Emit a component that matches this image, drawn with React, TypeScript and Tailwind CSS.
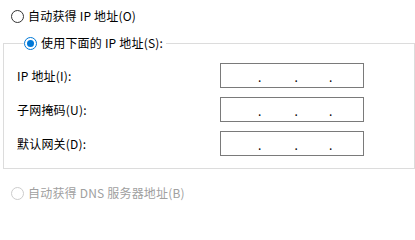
import React from "react";

type RadioProps = {
  checked?: boolean;
  disabled?: boolean;
  label: string;
};

const Radio: React.FC<RadioProps> = ({ checked, disabled, label }) => {
  return (
    <div className="flex items-center h-4">
      <span
        className={
          checked
            ? "w-[13px] h-[13px] rounded-full border border-[#0078d7] flex items-center justify-center"
            : disabled
            ? "w-[13px] h-[13px] rounded-full border border-[#cccccc]"
            : "w-[13px] h-[13px] rounded-full border border-[#333333]"
        }
      >
        {checked && <span className="w-[7px] h-[7px] rounded-full bg-[#0078d7]" />}
      </span>
      <span className={disabled ? "ml-[4px] text-[#a0a0a0]" : "ml-[4px] text-[#000000]"}>{label}</span>
    </div>
  );
};

const IpBox: React.FC = () => (
  <div className="w-[144px] h-[25px] border border-[#7a7a7a] bg-white flex items-center leading-none pt-[3px]">
    <span className="w-[37px]" />
    <span>.</span>
    <span className="w-[33px]" />
    <span>.</span>
    <span className="w-[31px]" />
    <span>.</span>
  </div>
);

const fields = ["IP 地址(I):", "子网掩码(U):", "默认网关(D):"];

export default function App() {
  return (
    <div
      className="w-[415px] h-[208px] bg-white overflow-hidden text-[12px] leading-4 tracking-[0.2px]"
      style={{ fontFamily: '"Noto Sans CJK SC", "Noto Sans", sans-serif' }}
    >
      <div className="pt-2 pl-[11px]">
        <Radio label="自动获得 IP 地址(O)" />
      </div>

      <fieldset className="mt-[11px] ml-[3px] w-[412px] border border-[#dcdcdc] pl-[13px] pb-[12px]">
        <legend className="ml-[7px] pr-[3px]">
          <Radio checked label="使用下面的 IP 地址(S):" />
        </legend>
        <div className="flex flex-col gap-[9px] mt-[12px]">
          {fields.map((f) => (
            <div key={f} className="flex items-center">
              <span className="w-[203px] text-[#000000]">{f}</span>
              <IpBox />
            </div>
          ))}
        </div>
      </fieldset>

      <div className="mt-[16px] pl-[11px]">
        <Radio disabled label="自动获得 DNS 服务器地址(B)" />
      </div>
    </div>
  );
}
